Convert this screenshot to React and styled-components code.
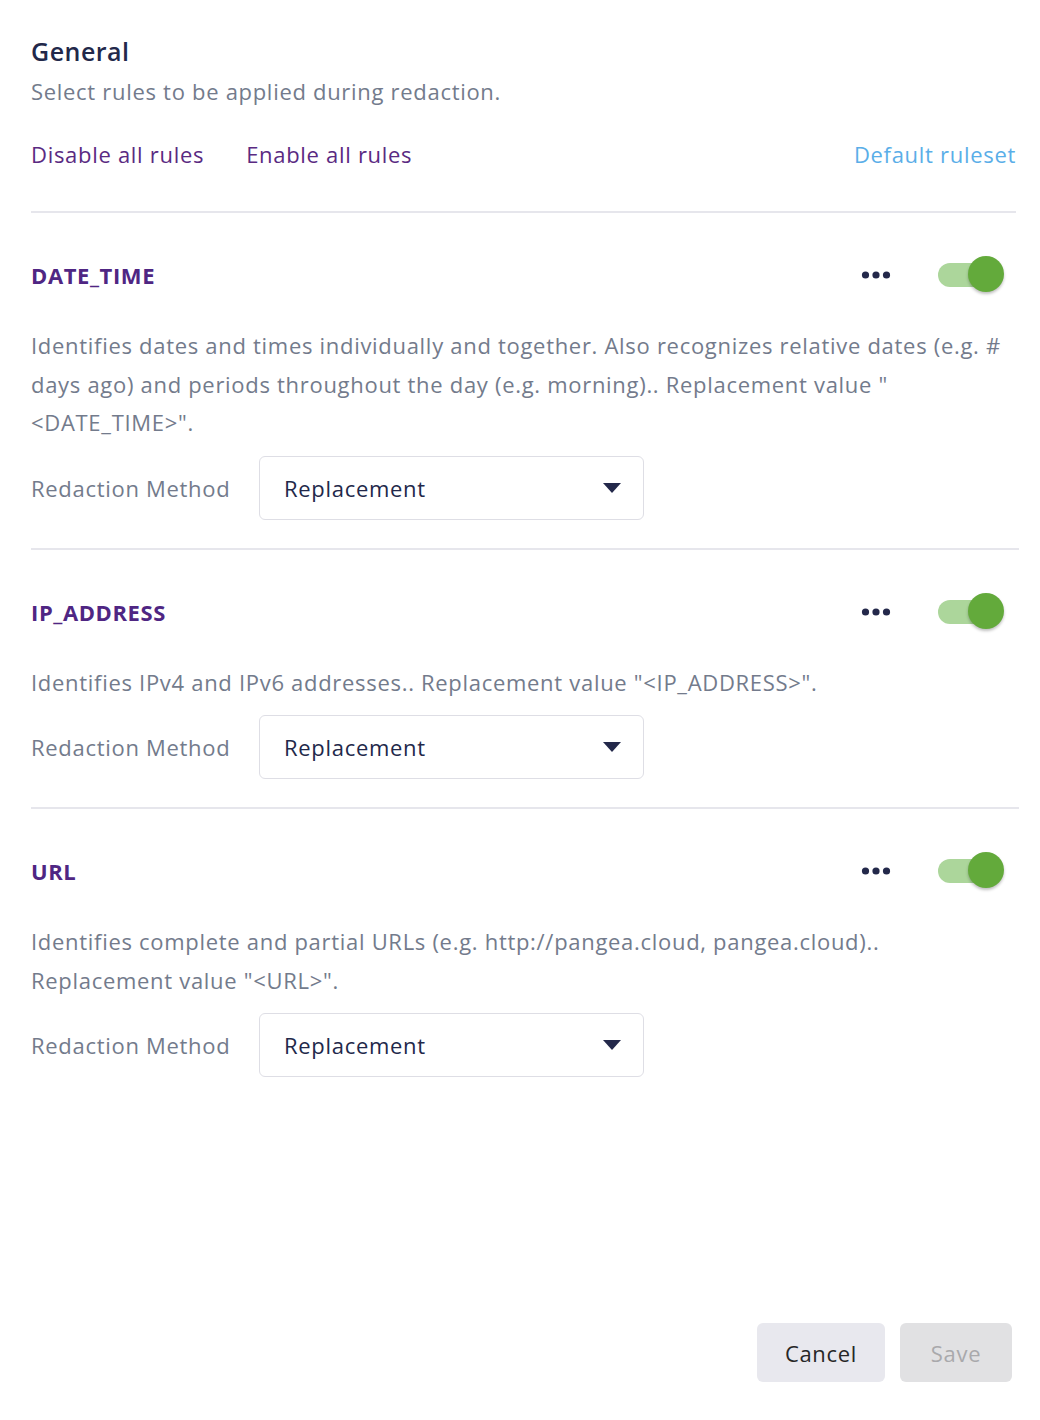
import React from "react";
import styled, { createGlobalStyle } from "styled-components";

const Global = createGlobalStyle`
  html, body { margin: 0; padding: 0; background: #fff; }
  body { font-family: "Open Sans", "Noto Sans", sans-serif; -webkit-font-smoothing: antialiased; letter-spacing: 0.7px; }
  * { box-sizing: border-box; }
`;

const Page = styled.div`
  min-height: 1420px;
  display: flex;
  flex-direction: column;
  padding: 35px 21px 38px 31px;
`;

const Title = styled.h1`
  margin: 0;
  font-size: 25px;
  line-height: 32px;
  font-weight: 600;
  color: #22284a;
  letter-spacing: 0.5px;
`;

const Subtitle = styled.p`
  margin: 8px 0 0;
  font-size: 22px;
  line-height: 32px;
  color: #737b8c;
`;

const LinkRow = styled.div`
  display: flex;
  align-items: center;
  gap: 42px;
  margin-top: 31px;
  padding-right: 3px;
`;

const LinkButton = styled.button`
  border: 0;
  background: none;
  padding: 0;
  font: inherit;
  letter-spacing: inherit;
  font-size: 22px;
  line-height: 32px;
  cursor: pointer;
  color: ${(p) => (p.$accent ? "#5aaee8" : "#5a2a82")};
  margin-left: ${(p) => (p.$push ? "auto" : "0")};
`;

const Divider = styled.hr`
  margin: ${(p) => p.$top || 0}px 0 0;
  border: 0;
  height: 2px;
  background: #e6e6ec;
  width: ${(p) => (p.$short ? "985px" : "988px")};
`;

const Section = styled.section`
  padding: 42px 0 28px;
`;

const RuleHeader = styled.div`
  display: flex;
  align-items: center;
  height: 40px;
`;

const RuleName = styled.h2`
  margin: 0;
  font-size: 22px;
  font-weight: 700;
  color: #4f2683;
  flex: 1;
  letter-spacing: 0.6px;
`;

const MoreButton = styled.button`
  border: 0;
  background: none;
  padding: 0;
  width: 30px;
  height: 30px;
  display: flex;
  align-items: center;
  justify-content: center;
  margin-right: 47px;
  cursor: pointer;
`;

const Switch = styled.div`
  position: relative;
  width: 66px;
  height: 38px;
  margin-right: 15px;
  flex-shrink: 0;
`;

const Track = styled.div`
  position: absolute;
  left: 0;
  top: 7px;
  width: 60px;
  height: 24px;
  border-radius: 12px;
  background: #acd69b;
`;

const Knob = styled.div`
  position: absolute;
  right: 0;
  top: 0;
  width: 36px;
  height: 36px;
  border-radius: 50%;
  background: #63aa3b;
  box-shadow: 0 2px 3px rgba(0, 0, 0, 0.25);
`;

const Description = styled.p`
  margin: 31px 0 0;
  font-size: 22px;
  line-height: 38.5px;
  color: #737b8c;
  max-width: 985px;
`;

const MethodRow = styled.div`
  display: flex;
  align-items: center;
  margin-top: 14px;
`;

const MethodLabel = styled.span`
  width: 228px;
  font-size: 22px;
  color: #737b8c;
`;

const Select = styled.div`
  width: 385px;
  height: 64px;
  border: 1.5px solid #dedee5;
  border-radius: 6px;
  display: flex;
  align-items: center;
  justify-content: space-between;
  padding: 0 22px 0 24px;
  font-size: 22px;
  color: #22284a;
`;

const Footer = styled.div`
  margin-top: auto;
  display: flex;
  justify-content: flex-end;
  gap: 15px;
  padding-right: 7px;
`;

const FooterButton = styled.button`
  border: 0;
  border-radius: 6px;
  height: 59px;
  width: ${(p) => p.$w}px;
  font: inherit;
  letter-spacing: inherit;
  font-size: 22px;
  background: ${(p) => (p.disabled ? "#e1e1e3" : "#e8e8ee")};
  color: ${(p) => (p.disabled ? "#a9a9ac" : "#262626")};
`;

const Dots = () => (
  <svg width="30" height="10" viewBox="0 0 30 10">
    <circle cx="4.5" cy="5" r="3.6" fill="#23284a" />
    <circle cx="15" cy="5" r="3.6" fill="#23284a" />
    <circle cx="25.5" cy="5" r="3.6" fill="#23284a" />
  </svg>
);

const Caret = () => (
  <svg width="18" height="10" viewBox="0 0 18 10">
    <path d="M0 0 L18 0 L9 10 Z" fill="#23284a" />
  </svg>
);

const rules = [
  {
    name: "DATE_TIME",
    desc:
      'Identifies dates and times individually and together. Also recognizes relative dates (e.g. # days ago) and periods throughout the day (e.g. morning).. Replacement value "<DATE_TIME>".',
  },
  {
    name: "IP_ADDRESS",
    desc: 'Identifies IPv4 and IPv6 addresses.. Replacement value "<IP_ADDRESS>".',
  },
  {
    name: "URL",
    desc:
      'Identifies complete and partial URLs (e.g. http://pangea.cloud, pangea.cloud).. Replacement value "<URL>".',
  },
];

export default function App() {
  return (
    <>
      <Global />
      <Page>
        <Title>General</Title>
        <Subtitle>Select rules to be applied during redaction.</Subtitle>
        <LinkRow>
          <LinkButton>Disable all rules</LinkButton>
          <LinkButton>Enable all rules</LinkButton>
          <LinkButton $accent $push>Default ruleset</LinkButton>
        </LinkRow>
        <Divider $top={41} $short />
        {rules.map((r, i) => (
          <React.Fragment key={r.name}>
            <Section>
              <RuleHeader>
                <RuleName>{r.name}</RuleName>
                <MoreButton aria-label="More">
                  <Dots />
                </MoreButton>
                <Switch>
                  <Track />
                  <Knob />
                </Switch>
              </RuleHeader>
              <Description>{r.desc}</Description>
              <MethodRow>
                <MethodLabel>Redaction Method</MethodLabel>
                <Select>
                  <span>Replacement</span>
                  <Caret />
                </Select>
              </MethodRow>
            </Section>
            {i < rules.length - 1 && <Divider />}
          </React.Fragment>
        ))}
        <Footer>
          <FooterButton $w={128}>Cancel</FooterButton>
          <FooterButton $w={112} disabled>Save</FooterButton>
        </Footer>
      </Page>
    </>
  );
}
